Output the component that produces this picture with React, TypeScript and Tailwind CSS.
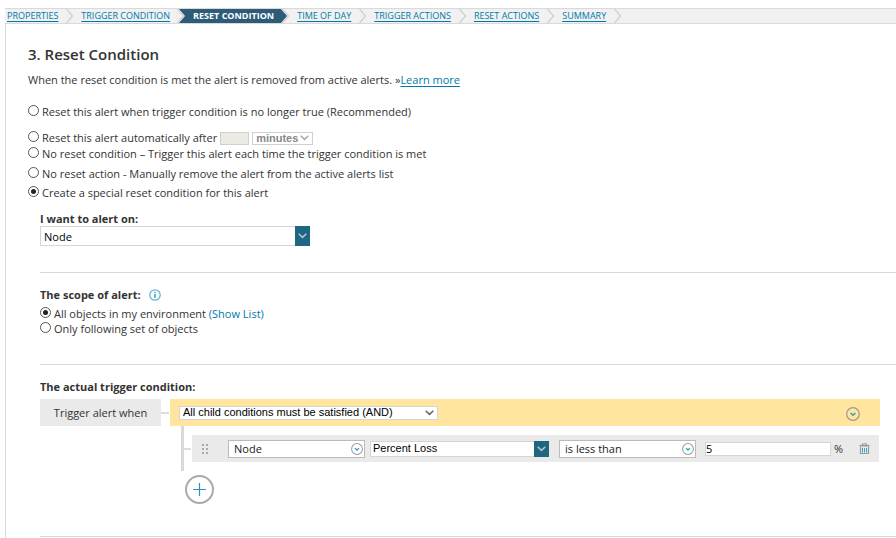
import clsx from "clsx";
import { ReactNode, useState } from "react";

const STEPS = [
  "PROPERTIES",
  "TRIGGER CONDITION",
  "RESET CONDITION",
  "TIME OF DAY",
  "TRIGGER ACTIONS",
  "RESET ACTIONS",
  "SUMMARY",
];
const ACTIVE_STEP = 2;

const StepDivider = ({ before, after }: { before: boolean; after: boolean }) => (
  <svg width="23" height="14" viewBox="0 0 23 14" className="shrink-0">
    {before && <path d="M9 0H23V14H9L15 7Z" fill="#2d5c78" />}
    {after && <path d="M0 0H7L13 7L7 14H0Z" fill="#2d5c78" />}
    <path
      d={before ? "M7.500 0L13.500 7L7.500 14" : "M8.500 0L14.500 7L8.500 14"}
      fill="none"
      stroke="#d0d0d0"
      strokeWidth="1.300"
    />
  </svg>
);

const Wizard = () => (
  <nav className="ml-[5px] flex h-4 items-center border-y border-[#d9d9d9] bg-[#f1f1f1] pl-[2px] text-[9px] leading-[14px] whitespace-nowrap">
    {STEPS.map((step, i) => (
      <div key={step} className="flex items-center">
        {i === ACTIVE_STEP ? (
          <span className="bg-[#2d5c78] font-bold text-white">{step}</span>
        ) : (
          <a href="#" className="text-[#0079aa] underline underline-offset-2">
            {step}
          </a>
        )}
        <StepDivider before={i + 1 === ACTIVE_STEP} after={i === ACTIVE_STEP} />
      </div>
    ))}
  </nav>
);

interface RadioProps {
  name: string;
  checked: boolean;
  onChange: () => void;
  children: ReactNode;
  className?: string;
}

const Radio = ({ name, checked, onChange, children, className }: RadioProps) => (
  <label className={clsx("flex w-fit items-center gap-[3px]", className)}>
    <input
      type="radio"
      name={name}
      checked={checked}
      onChange={onChange}
      className="mb-[3px] size-[11px] shrink-0 appearance-none rounded-full border border-[#555] bg-white bg-clip-content p-[2px] checked:bg-[#222]"
    />
    <span>{children}</span>
  </label>
);

const Chevron = ({ className }: { className?: string }) => (
  <svg
    width="9"
    height="6"
    viewBox="0 0 9 6"
    fill="none"
    stroke="currentColor"
    strokeWidth="1.500"
    className={className}
  >
    <path d="M0.700 0.800L4.500 4.400L8.300 0.800" />
  </svg>
);

const CircleChevron = ({ size }: { size: number }) => (
  <svg width={size} height={size} viewBox="0 0 14 14" fill="none">
    <circle cx="7" cy="7" r="6.300" stroke="#999" strokeWidth="1.200" />
    <path d="M4.600 6L7 8.200L9.400 6" stroke="#2f9fc4" strokeWidth="1.500" />
  </svg>
);

interface SelectProps {
  label: string;
  value: string;
  icon: ReactNode;
  className: string;
  selectClassName: string;
  disabled?: boolean;
}

const Select = ({ label, value, icon, className, selectClassName, disabled }: SelectProps) => (
  <div className={clsx("relative shrink-0", className)}>
    <select
      aria-label={label}
      disabled={disabled}
      className={clsx(
        "block size-full appearance-none border bg-white text-[11px] leading-none outline-none",
        selectClassName
      )}
    >
      <option>{value}</option>
    </select>
    <span className="pointer-events-none absolute inset-y-0 right-0 flex">{icon}</span>
  </div>
);

const ComboArrow = () => (
  <span className="flex w-[15px] items-center justify-center bg-[#1f6680] text-[#a9cbd6]">
    <Chevron />
  </span>
);

const InfoIcon = () => (
  <svg width="12" height="12" viewBox="0 0 12 12" fill="none">
    <circle cx="6" cy="6" r="5.200" stroke="#67b5dc" strokeWidth="1.300" />
    <path d="M6 5V9M6 2.800V4.100" stroke="#3b9dcb" strokeWidth="1.500" />
  </svg>
);

const TrashIcon = () => (
  <svg width="11" height="12" viewBox="0 0 11 12" fill="none">
    <path d="M3.500 2V0.800H7.500V2" stroke="#999" />
    <path d="M0.500 2.700H10.500" stroke="#999" strokeWidth="1.600" />
    <path d="M1.500 4V10.500H9.500V4" stroke="#999" strokeWidth="1.200" />
    <path d="M3.500 5V9.500M5.500 5V9.500M7.500 5V9.500" stroke="#3fa3c7" />
  </svg>
);

const GripIcon = () => (
  <svg width="7" height="10" viewBox="0 0 7 10" fill="#aaa">
    {[0, 4, 8].map((y) => (
      <g key={y}>
        <rect x="0" y={y} width="2" height="2" />
        <rect x="4" y={y} width="2" height="2" />
      </g>
    ))}
  </svg>
);

const Condition = () => (
  <div className="mr-4">
    <div className="flex items-center">
      <div className="flex h-[27px] w-[121px] items-center justify-center bg-[#eaeaea]">
        Trigger alert when
      </div>
      <div className="h-[2px] w-2 bg-[#dcdcdc]" />
      <div className="ml-px flex h-[27px] flex-1 items-center justify-between bg-[#ffe59e] pr-5 pl-[9px]">
        <Select
          label="Child conditions"
          value="All child conditions must be satisfied (AND)"
          className="h-[14px] w-[259px]"
          selectClassName="border-[#d5d5d5] pl-[3px] font-['Liberation_Sans',sans-serif] text-black"
          icon={<Chevron className="mr-1 self-center text-[#666]" />}
        />
        <button type="button" aria-label="Condition menu" className="mt-[2px]">
          <CircleChevron size={14} />
        </button>
      </div>
    </div>

    {/* Child conditions */}
    <div className="ml-[141px] flex">
      <div className="h-[45px] w-[3px] bg-[#d9d9d9]" />
      <div className="mt-[9px] mr-px flex h-[27px] flex-1 items-center">
        <div className="mr-px h-[2px] w-[7px] bg-[#dcdcdc]" />
        <div className="flex h-full flex-1 items-center bg-[#eaeaea] pr-[9px] pl-[10px]">
          <GripIcon />
          <Select
            label="Object type"
            value="Node"
            className="ml-[19px] h-[18px] w-[137px]"
            selectClassName="border-[#bbb] pl-[5px] text-[#222]"
            icon={
              <span className="mr-[2px] flex items-center">
                <CircleChevron size={12} />
              </span>
            }
          />
          <Select
            label="Metric"
            value="Percent Loss"
            className="ml-[5px] h-4 w-[179px]"
            selectClassName="border-[#d5d5d5] pl-[2px] font-['Liberation_Sans',sans-serif] text-black"
            icon={<ComboArrow />}
          />
          <Select
            label="Operator"
            value="is less than"
            className="ml-[10px] h-[18px] w-[137px]"
            selectClassName="border-[#bbb] pl-[5px] text-[#222]"
            icon={
              <span className="mr-[2px] flex items-center">
                <CircleChevron size={12} />
              </span>
            }
          />
          <input
            aria-label="Value"
            defaultValue="5"
            className="ml-[9px] h-[14px] w-[126px] border border-[#d5d5d5] bg-white text-[11px] text-black outline-none"
          />
          <span className="ml-[3px]">%</span>
          <button type="button" aria-label="Delete condition" className="ml-auto">
            <TrashIcon />
          </button>
        </div>
      </div>
    </div>
    <button
      type="button"
      aria-label="Add condition"
      className="mt-1 ml-[145px] flex size-[29px] items-center justify-center rounded-full border-2 border-[#aaa]"
    >
      <svg width="13" height="13" viewBox="0 0 13 13" stroke="#2b94bd" strokeWidth="1.200">
        <path d="M6.500 0V13M0 6.500H13" />
      </svg>
    </button>
  </div>
);

export default function App() {
  const [reset, setReset] = useState(4);
  const [scope, setScope] = useState(0);

  return (
    <div className="min-h-screen bg-white pt-2 font-['Open_Sans',sans-serif] text-[11px] leading-4 text-[#333]">
      <Wizard />
      <main className="ml-[5px] border-l border-[#d9d9d9] pb-1 pl-[22px]">
        <h1 className="pt-5 text-[15px] leading-5 font-semibold">3. Reset Condition</h1>
        <p className="mt-2">
          When the reset condition is met the alert is removed from active alerts. »
          <a href="#" className="text-[#0079aa] underline underline-offset-2">
            Learn more
          </a>
        </p>

        <div className="mt-4">
          <Radio name="reset" checked={reset === 0} onChange={() => setReset(0)}>
            Reset this alert when trigger condition is no longer true (Recommended)
          </Radio>
          <div className="mt-[10px] flex h-4 items-center">
            <Radio name="reset" checked={reset === 1} onChange={() => setReset(1)}>
              Reset this alert automatically after
            </Radio>
            <input
              aria-label="Reset delay"
              disabled
              className="ml-[3px] h-[13px] w-[29px] border border-[#d0d0d0] bg-[#ebebe4]"
            />
            <Select
              label="Delay unit"
              value="minutes"
              disabled
              className="ml-[3px] h-[13px] w-[61px]"
              selectClassName="border-[#d0d0d0] pl-[3px] font-['Liberation_Sans',sans-serif] font-bold text-[#888] opacity-100"
              icon={<Chevron className="mr-1 self-center text-[#aaa]" />}
            />
          </div>
          <Radio name="reset" checked={reset === 2} onChange={() => setReset(2)}>
            No reset condition – Trigger this alert each time the trigger condition is met
          </Radio>
          <Radio name="reset" checked={reset === 3} onChange={() => setReset(3)} className="mt-1">
            No reset action - Manually remove the alert from the active alerts list
          </Radio>
          <Radio name="reset" checked={reset === 4} onChange={() => setReset(4)} className="mt-[3px]">
            Create a special reset condition for this alert
          </Radio>
        </div>

        <div className="ml-3">
          <section className="mt-[10px] border-b border-[#d9d9d9] pb-[26px]">
            <h2 className="leading-[15px] font-bold">I want to alert on:</h2>
            <Select
              label="I want to alert on"
              value="Node"
              className="h-5 w-[270px]"
              selectClassName="border-[#d5d5d5] pl-[3px] text-black"
              icon={<ComboArrow />}
            />
          </section>

          <section className="mt-[14px] border-b border-[#d9d9d9] pb-[27px]">
            <h2 className="mb-1 flex items-center gap-2 leading-[15px] font-bold">
              The scope of alert:
              <InfoIcon />
            </h2>
            <Radio name="scope" checked={scope === 0} onChange={() => setScope(0)}>
              All objects in my environment{" "}
              <a href="#" className="text-[#0079aa]">
                (Show List)
              </a>
            </Radio>
            <Radio name="scope" checked={scope === 1} onChange={() => setScope(1)} className="-mt-px">
              Only following set of objects
            </Radio>
          </section>

          <section className="mt-[14px] border-b border-[#d9d9d9] pb-8">
            <h2 className="mb-[5px] leading-[15px] font-bold">The actual trigger condition:</h2>
            <Condition />
          </section>
        </div>
      </main>
    </div>
  );
}
